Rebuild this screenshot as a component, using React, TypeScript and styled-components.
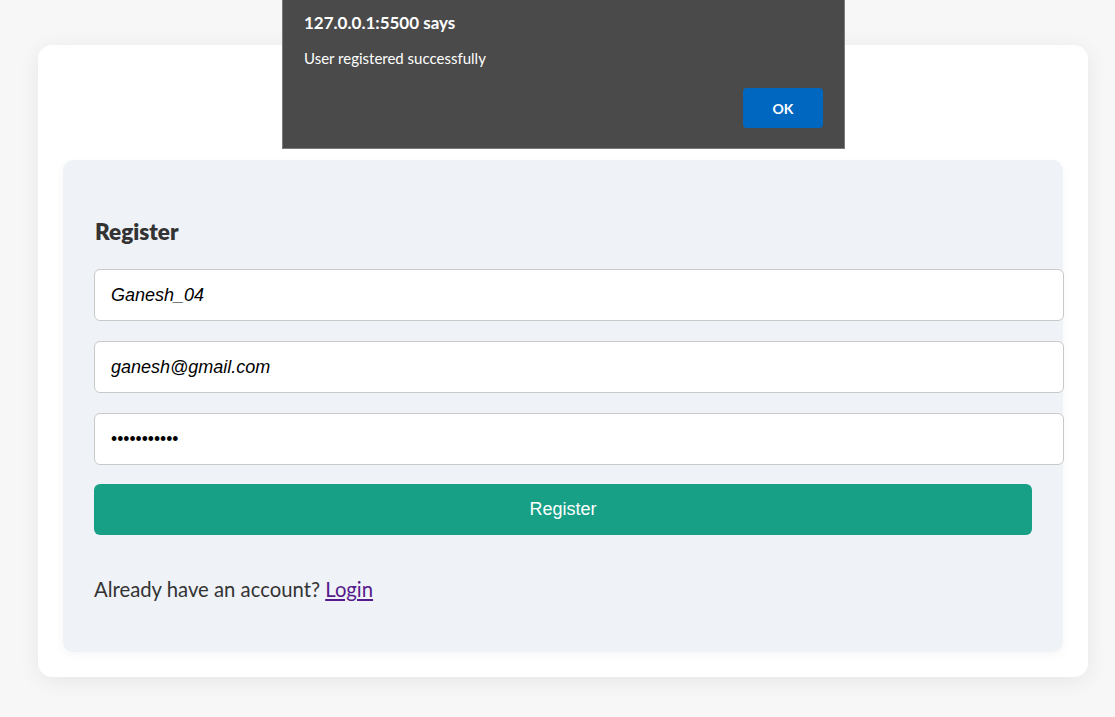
import React from "react";
import styled, { createGlobalStyle } from "styled-components";

const GlobalStyle = createGlobalStyle`
  html, body {
    margin: 0;
    padding: 0;
    background: #f7f7f7;
  }
  body {
    font-family: Lato, "Noto Sans", sans-serif;
  }
`;

export default function App() {
  return (
    <>
      <GlobalStyle />
      <Page>
        <Card>
          <Panel>
            <Title>Register</Title>
            <Form onSubmit={(e) => e.preventDefault()}>
              <Field type="text" defaultValue="Ganesh_04" />
              <Field type="email" defaultValue="ganesh@gmail.com" />
              <Field type="password" defaultValue="ganesh12345" />
              <SubmitButton type="submit">Register</SubmitButton>
            </Form>
            <Footnote>
              Already have an account? <LoginLink href="#">Login</LoginLink>
            </Footnote>
          </Panel>
        </Card>
      </Page>
      <Alert role="alertdialog">
        <AlertTitle>127.0.0.1:5500 says</AlertTitle>
        <AlertMessage>User registered successfully</AlertMessage>
        <AlertActions>
          <OkButton>OK</OkButton>
        </AlertActions>
      </Alert>
    </>
  );
}

const Page = styled.div`
  padding: 45px 0 40px 38px;
`;

const Card = styled.div`
  width: 1050px;
  box-sizing: border-box;
  padding: 115px 25px 25px 25px;
  background: #ffffff;
  border-radius: 14px;
  box-shadow: 0 4px 22px rgba(0, 0, 0, 0.07);
`;

const Panel = styled.div`
  width: 1000px;
  box-sizing: border-box;
  padding: 59px 31px 51px 31px;
  background: #eff2f7;
  border-radius: 10px;
  box-shadow: 0 3px 10px rgba(0, 0, 0, 0.04);
`;

const Title = styled.h2`
  margin: 0 0 24px 1px;
  font-size: 22.5px;
  line-height: 26px;
  font-weight: 800;
  color: #333333;
`;

const Form = styled.form`
  display: flex;
  flex-direction: column;
  gap: 20px;
`;

const Field = styled.input`
  width: calc(100% - 2px);
  height: 50px;
  padding: 0 16px;
  border: 1px solid #c9c9c9;
  border-radius: 6px;
  background: #ffffff;
  font-family: "Liberation Sans", Arial, sans-serif;
  font-style: italic;
  font-size: 18px;
  color: #000000;
  outline: none;

  &[type="password"] {
    font-style: normal;
    font-size: 17.5px;
  }
`;

const SubmitButton = styled.button`
  width: 100%;
  box-sizing: border-box;
  height: 51px;
  margin-top: -1px;
  border: none;
  border-radius: 6px;
  background: #17a086;
  color: #ffffff;
  font-family: "Liberation Sans", Arial, sans-serif;
  font-size: 18px;
  cursor: pointer;
`;

const Footnote = styled.p`
  margin: 42px 0 0 0;
  font-size: 20.3px;
  line-height: 24px;
  color: #333333;
`;

const LoginLink = styled.a`
  color: #551a8b;
  text-decoration: underline;
`;

const Alert = styled.div`
  position: fixed;
  top: 0;
  left: 282px;
  width: 563px;
  height: 149px;
  box-sizing: border-box;
  padding: 12px 21px 0 21px;
  background: #4a4a4a;
  border: 1px solid #7b7b7b;
  border-top: none;
  color: #ffffff;
  display: flex;
  flex-direction: column;
  font-family: Lato, "Noto Sans", sans-serif;
`;

const AlertTitle = styled.div`
  font-size: 17px;
  line-height: 22px;
  font-weight: 700;
`;

const AlertMessage = styled.div`
  margin-top: 14px;
  font-size: 15px;
  line-height: 20px;
`;

const AlertActions = styled.div`
  margin-top: 20px;
  display: flex;
  justify-content: flex-end;
`;

const OkButton = styled.button`
  width: 80px;
  height: 40px;
  border: none;
  border-radius: 4px;
  background: #0067c0;
  color: #ffffff;
  font-family: Lato, "Noto Sans", sans-serif;
  font-size: 14px;
  font-weight: 700;
`;
